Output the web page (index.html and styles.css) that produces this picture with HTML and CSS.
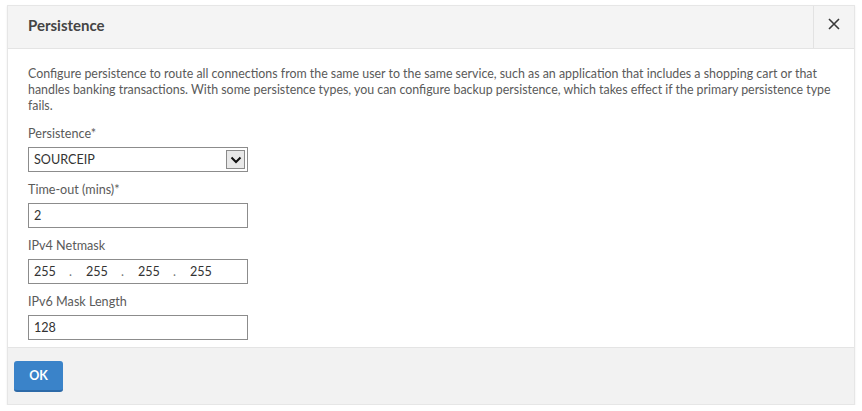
FILE: index.html
```html
<!DOCTYPE html>
<html>
<head>
<meta charset="utf-8">
<link rel="stylesheet" href="styles.css">
</head>
<body>
<div class="dialog">
  <div class="header">
    <div class="title">Persistence</div>
    <div class="close">
      <svg width="12" height="12" viewBox="0 0 12 12"><path d="M1 1 L11 11 M11 1 L1 11" stroke="#3a3a3a" stroke-width="1.6" fill="none"/></svg>
    </div>
  </div>
  <div class="body">
    <p class="desc">Configure persistence to route all connections from the same user to the same service, such as an application that includes a shopping cart or that handles banking transactions. With some persistence types, you can configure backup persistence, which takes effect if the primary persistence type fails.</p>
    <div class="field">
      <div class="label">Persistence*</div>
      <div class="input select">
        <span class="val">SOURCEIP</span>
        <span class="arrow"><svg width="12" height="8" viewBox="0 0 12 8"><path d="M1.5 1.5 L6 6 L10.5 1.5" stroke="#111" stroke-width="2" fill="none"/></svg></span>
      </div>
    </div>
    <div class="field">
      <div class="label">Time-out (mins)*</div>
      <div class="input"><span class="val">2</span></div>
    </div>
    <div class="field">
      <div class="label">IPv4 Netmask</div>
      <div class="input ip">
        <span class="oct">255</span><span class="dot">.</span>
        <span class="oct">255</span><span class="dot">.</span>
        <span class="oct">255</span><span class="dot">.</span>
        <span class="oct">255</span>
      </div>
    </div>
    <div class="field">
      <div class="label">IPv6 Mask Length</div>
      <div class="input"><span class="val">128</span></div>
    </div>
  </div>
  <div class="footer">
    <button class="ok">OK</button>
  </div>
</div>
</body>
</html>
```
FILE: styles.css
```css
* { box-sizing: border-box; }
html, body { margin: 0; padding: 0; background: #fff; }
body { font-family: Lato, "Open Sans", sans-serif; color: #5a5a5a; }
.dialog {
  margin: 5px 0 0 7px;
  width: 848px;
  border: 1px solid #e6e6e6;
  display: flex;
  flex-direction: column;
  box-shadow: 0 1px 2px rgba(0,0,0,0.08);
}
.header {
  height: 43px;
  background: #f4f4f4;
  border-bottom: 1px solid #e4e4e4;
  display: flex;
  align-items: stretch;
  flex: none;
}
.title {
  flex: 1;
  padding-left: 20px;
  padding-bottom: 5px;
  font-size: 15px;
  font-weight: bold;
  color: #444;
  display: flex;
  align-items: center;
}
.close {
  width: 41px;
  border-left: 1px solid #e2e2e2;
  display: flex;
  align-items: center;
  justify-content: center;
  padding-bottom: 6px;
}
.body {
  height: 298px;
  padding: 17px 20px 0 20px;
}
.desc {
  margin: 0 0 12px 0;
  font-size: 12.4px;
  line-height: 16px;
}
.field { margin-bottom: 10px; }
.label {
  font-size: 12.6px;
  line-height: 16px;
  margin-bottom: 5px;
}
.input {
  width: 220px;
  height: 25px;
  border: 1px solid #8c8c8c;
  display: flex;
  align-items: center;
  padding-left: 5px;
  font-size: 12.6px;
  color: #333;
}
.select { justify-content: space-between; padding-right: 2px; }
.arrow {
  width: 19px;
  height: 19px;
  border: 1px solid #8a8a8a;
  background: #e8e8e8;
  display: flex;
  align-items: center;
  justify-content: center;
}
.ip .oct { width: 35px; }
.ip .dot { width: 17px; color: #777; }
.footer {
  height: 57px;
  background: #f2f2f2;
  border-top: 1px solid #e4e4e4;
  padding: 13px 0 0 6px;
  flex: none;
}
.ok {
  width: 49px;
  height: 31px;
  background: #3a83c9;
  border: none;
  border-bottom: 2px solid #2d6aa8;
  border-radius: 3px;
  color: #fff;
  font-family: inherit;
  font-weight: bold;
  font-size: 12.5px;
  padding: 0;
}
```
